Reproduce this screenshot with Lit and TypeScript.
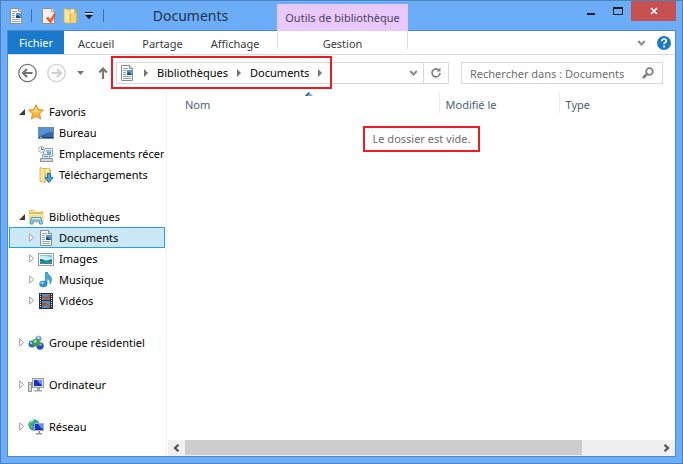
import { LitElement, html, css, svg, nothing } from "lit";
import { customElement, property } from "lit/decorators.js";

const icons: Record<string, unknown> = {
  doc: svg`<path d="M2.500.5h8l3 3v12h-11z" fill="#fdfdfd" stroke="#858d96"/><path d="M10.500.5v3h3" fill="#dfe4ea" stroke="#858d96"/><path d="M4 3.500h5M4 5.500h3M4 7.500h3M4 9.500h3M4 11.500h8M4 13.500h8" stroke="#93a5bd"/><rect x="8" y="5" width="5" height="5" fill="#5d9bd8"/><path d="M8 8l2-1 3 3H8z" fill="#1f4a86"/>`,
  check: svg`<path d="M2.500.5h9l3 3v12h-12z" fill="#f4f1ee" stroke="#8e8e98"/><path d="M11.500.5v3h3" fill="#fff" stroke="#9b9ba3"/><path d="M7 9.500l3.500 4L15 6" fill="none" stroke="#e3673a" stroke-width="2.800"/>`,
  folder: svg`<path d="M2 1h11l2 2v12H2z" fill="#d9ae42"/><path d="M8 1.500h4v5H8z" fill="#fff3c4"/><path d="M9 5h5v10H8z" fill="#f3d36c"/><path d="M2 .5L8 2v13.500L2 14.500z" fill="#fae69c" stroke="#d8ac45" stroke-width=".8"/>`,
  star: svg`<path d="M8 .8l2.200 4.800 5.200.5-3.900 3.600 1.100 5.300L8 12.300 3.400 15l1.100-5.300L.6 6.100l5.200-.5z" fill="#ffb83c" stroke="#e58a27"/><path d="M8 3l1.400 3.500 3.200.4L8 8.500 3.500 7l3.100-.4z" fill="#ffe08a"/>`,
  desktop: svg`<rect x=".5" y="2.500" width="15" height="11" fill="#3466ae" stroke="#6d8cae"/><path d="M1 3h14v4Q8 7 1 12z" fill="#5b8fd4"/><path d="M1 12.500h14" stroke="#173f7b"/><path d="M2 12.500h2" stroke="#7fd0ef"/>`,
  recent: svg`<path d="M5.500 2.500h9v8h-9z" fill="#e9eff4" stroke="#9aa4ad"/><path d="M8 5h5" stroke="#4b9ad4"/><rect x="9" y="6" width="4" height="3" fill="#66aee0"/><path d="M4.500 8.500h7v4h-7z" fill="#e0e4e7" stroke="#9aa4ad"/><path d="M6 10.500h4" stroke="#4b9ad4"/><path d="M2.500 12.500h12v3h-12z" fill="#d3d9de" stroke="#88929b"/><circle cx="3.500" cy="3.500" r="3" fill="#f7f7f7" stroke="#a1a6ab"/><path d="M3.500 1.500v2h2" fill="none" stroke="#666"/>`,
  download: svg`<path d="M2 1h9l2 2v12H2z" fill="#e0b850"/><path d="M7 2h4v5H7z" fill="#fff3c4"/><path d="M8 5h4v10H7z" fill="#f3d36c"/><path d="M2 .5L7 2v13.500L2 14.500z" fill="#fae69c" stroke="#d8ac45" stroke-width=".8"/><path d="M9.500 6.500h3v4H15l-4 5-4-5h2.500z" fill="#41a9ea" stroke="#1971b8"/>`,
  library: svg`<path d="M1 1h5l1 1h8v3H1z" fill="#e5bd58"/><path d="M1 4h14.500v10H.5z" fill="#f8dd85"/><path d="M2 2.500h12" stroke="#fff5cd"/><path d="M1 4.500h14" stroke="#dcb75c"/><path d="M1 5.500h14" stroke="#fff2bd"/><path d="M3.500 8.500h9.500l1.500 6.500h-3v-3H5v3H2z" fill="#8fd0f1" stroke="#4a9dcc"/><path d="M4.500 9.500h7.500" stroke="#d8f2ff"/>`,
  image: svg`<rect x=".5" y="2.500" width="15" height="12" fill="#fcfcfc" stroke="#969da3"/><rect x="2" y="4" width="12" height="9" fill="#7cc5ec"/><path d="M2 5q5-1 12 2v2H2z" fill="#c8ecf8"/><path d="M2 8q3 0 6 2l6-2v2H2z" fill="#28734c"/><path d="M2 10h12v3H2z" fill="#2a8aa9"/>`,
  music: svg`<path d="M7.500 0h1.800q.5 2.500 3.200 4.500Q15 7 12 12q1-4-3-5.500V12H7.500z" fill="#49a9e4" stroke="#2585c8" stroke-width=".7"/><ellipse cx="5.300" cy="12" rx="4" ry="3.300" fill="#2690db"/><ellipse cx="4.300" cy="11" rx="1.800" ry="1.200" fill="#8bd0f5"/>`,
  video: svg`<path d="M1 0h14v16H1z" fill="#24303a"/><path d="M4 1h8v6H4zM4 8h8v7H4z" fill="#4f94c8"/><path d="M4 3l4 1 4-3v5L8 7 4 5zM4 10l3-1 5 4v2L8 12l-4 2z" fill="#a7583f"/><path d="M2.500 1v14M13.500 1v14" stroke="#e4edf2" stroke-dasharray="1 1"/>`,
  home: svg`<circle cx="4" cy="9" r="3.500" fill="#3267c2"/><circle cx="10.500" cy="3.800" r="3" fill="#6b9be0"/><circle cx="12" cy="11" r="3.700" fill="#2451b3"/><circle cx="8" cy="7.500" r="3.800" fill="#38a03f"/><circle cx="7.200" cy="6.300" r="1.500" fill="#a4e09a"/><circle cx="3" cy="8" r="1.200" fill="#a9c8f3"/><circle cx="12.500" cy="9.500" r="1.200" fill="#8eb1ec"/><circle cx="10.500" cy="2.700" r="1.200" fill="#cfe0fa"/>`,
  computer: svg`<rect x="4.500" y="1.500" width="11" height="9" fill="#dcdfe3" stroke="#9a9fa5"/><path d="M6 3h8v6H6z" fill="#1730c4"/><path d="M9 3h5v5q-3-1-5-5z" fill="#6a8df0"/><path d="M9 11h3v2h2v1.500H6V13h3z" fill="#a5a9ae"/><path d="M.5 5.500h3v9h-3z" fill="#d8dadd" stroke="#8d9196"/><path d="M1.500 7.500h1" stroke="#43b649"/>`,
  network: svg`<circle cx="6" cy="6" r="5.700" fill="#2c8fc8"/><path d="M1 4q3-4 6-3L5 4 3 5l2 3-1 2Q0 8 1 4zM8 1q3 1 3 4L8 4z" fill="#4fbf58"/><path d="M2 3q2-2 4-2" stroke="#b6eaf5" stroke-width="1.400" fill="none"/><rect x="6.500" y="4.500" width="9" height="7" fill="#1730c4" stroke="#a6adb8"/><path d="M10 5h5v5q-3-1-5-5z" fill="#6a8df0"/><path d="M10.500 12h1.500v2h2v1.500H8V14h2.500z" fill="#8e949b"/>`,
  back: svg`<circle cx="9.500" cy="10" r="8.700" fill="none" stroke="#757575" stroke-width="1.300"/><path d="M14.500 10H6M9 6l-4 4 4 4" fill="none" stroke="#757575" stroke-width="2.200"/>`,
  forward: svg`<circle cx="9.500" cy="10" r="8.700" fill="none" stroke="#d0d0d0" stroke-width="1.300"/><path d="M4.500 10H13M10 6l4 4-4 4" fill="none" stroke="#d0d0d0" stroke-width="2.200"/>`,
  up: svg`<path d="M6 13V3M2.200 6.500L6 2.500l3.800 4" fill="none" stroke="#777" stroke-width="2.200"/>`,
  down: svg`<path d="M0 0h7L3.500 4z" fill="#777"/>`,
  chevron: svg`<path d="M1.200 1L4.500 4.500 7.800 1" fill="none" stroke="#8f8f8f" stroke-width="2.200"/>`,
  crumb: svg`<path d="M0 0l4 4-4 4z" fill="#757575"/>`,
  refresh: svg`<path d="M9 3.200A4 4 0 1 0 10 6" fill="none" stroke="#808080" stroke-width="1.700"/><path d="M6.500 4.500H10.500V.5z" fill="#808080"/>`,
  search: svg`<circle cx="7.500" cy="4.500" r="3.300" fill="none" stroke="#808080" stroke-width="1.800"/><path d="M5 7L1 11" stroke="#808080" stroke-width="2.600"/>`,
  help: svg`<circle cx="7" cy="7" r="7" fill="#1979ca"/><path d="M4.800 5.300q0-2.300 2.300-2.300 2.200 0 2.200 1.900 0 1.100-1.200 1.700-1 .5-1 1.700M7.100 9.500v2" fill="none" stroke="#fff" stroke-width="1.700"/>`,
  quick: svg`<path d="M0 .5h8" stroke="#10151b"/><path d="M0 3h8L4 7z" fill="#10151b"/><path d="M0 1.500h8" stroke="#d4e6fa"/>`,
  min: svg`<path d="M0 8h8" stroke="#1e1e1e" stroke-width="2"/>`,
  max: svg`<path d="M.5 1.500h9v6h-9z" fill="none" stroke="#1e1e1e"/><path d="M0 1h10" stroke="#1e1e1e" stroke-width="2"/>`,
  close: svg`<path d="M1 1l6 6M7 1L1 7" stroke="#fff" stroke-width="1.700"/>`,
  open: svg`<path d="M6 0v6H0z" fill="#3a3a3a"/>`,
  closed: svg`<path d="M.7.9L4.600 4.500.7 8.100z" fill="#fff" stroke="#a0a0a0"/>`,
  left: svg`<path d="M5.500.8L2 4l3.500 3.200" fill="none" stroke="#505050" stroke-width="2.200"/>`,
  right: svg`<path d="M1.500.8L5 4 1.500 7.200" fill="none" stroke="#505050" stroke-width="2.200"/>`,
  sort: svg`<path d="M0 4l4-4 4 4z" fill="#7fabc6"/><path d="M0 4l4-4v2L2 4z" fill="#28506e"/>`,
};

const icon = (name: string, w = 16, h = w) =>
  html`<svg width=${w} height=${h} viewBox="0 0 ${w} ${h}" aria-hidden="true">${icons[name]}</svg>`;

const shared = css`
  * { box-sizing: border-box; }
  button, input { font: inherit; color: inherit; margin: 0; padding: 0; border: 0; background: none; border-radius: 0; }
  button { display: flex; align-items: center; justify-content: center; }
  a { color: inherit; text-decoration: none; }
  svg { display: block; flex: none; }
`;

@customElement("tree-item")
export class TreeItem extends LitElement {
  @property() label = "";
  @property() icon = "";
  @property() twisty = "";
  @property({ type: Boolean }) nested = false;
  @property({ type: Boolean }) selected = false;

  static styles = [shared, css`
    :host { display: block; }
    .row { display: flex; align-items: center; height: 21px; margin-left: 1px; padding-left: 6px; border: 1px solid transparent; overflow: hidden; }
    .nested { padding-left: 16px; }
    .selected { background: #cbe8f6; border-color: #26a0da; }
    .twisty { width: 12px; height: 19px; flex: none; }
    .link { display: flex; align-items: center; gap: 5px; white-space: nowrap; }
  `];

  render() {
    const mark = this.twisty === "open" ? icon("open", 6) : icon("closed", 6, 9);
    return html`<div class="row ${this.nested ? "nested" : ""} ${this.selected ? "selected" : ""}">
      ${this.twisty
        ? html`<button class="twisty" aria-label="Développer ${this.label}">${mark}</button>`
        : html`<span class="twisty"></span>`}
      <a class="link" href="#" aria-current=${this.selected ? "true" : nothing}>${icon(this.icon)}<span>${this.label}</span></a>
    </div>`;
  }
}

interface Entry { label: string; icon: string; twisty?: string; children?: Entry[]; selected?: boolean }

const tree: Entry[] = [
  { label: "Favoris", icon: "star", twisty: "open", children: [
    { label: "Bureau", icon: "desktop" },
    { label: "Emplacements récents", icon: "recent" },
    { label: "Téléchargements", icon: "download" },
  ] },
  { label: "Bibliothèques", icon: "library", twisty: "open", children: [
    { label: "Documents", icon: "doc", twisty: "closed", selected: true },
    { label: "Images", icon: "image", twisty: "closed" },
    { label: "Musique", icon: "music", twisty: "closed" },
    { label: "Vidéos", icon: "video", twisty: "closed" },
  ] },
  { label: "Groupe résidentiel", icon: "home", twisty: "closed" },
  { label: "Ordinateur", icon: "computer", twisty: "closed" },
  { label: "Réseau", icon: "network", twisty: "closed" },
];

@customElement("app-root")
export class AppRoot extends LitElement {
  static styles = [shared, css`
    :host { display: block; font: 11px/16px "Noto Sans", "Open Sans", sans-serif; color: #000; }
    .window { display: flex; flex-direction: column; min-height: 100vh; padding: 0 6px 6px; background: #6badf6; border: 1px solid #4a83bf; }

    .titlebar { display: flex; height: 29px; }
    .caption { display: flex; align-items: center; width: 270px; padding-left: 1px; }
    .quick { display: flex; align-items: center; }
    .sep { width: 1px; height: 13px; background: #3f6fa5; }
    .q-doc { margin-right: 7px; }
    .q-check { margin: 0 6px 0 8px; }
    .q-more { margin: 0 10px 0 7px; }
    .title { flex: 1; margin: 0; font-size: 14px; line-height: 20px; font-weight: 400; text-align: center; color: #1f3348; }
    .context { width: 131px; margin: 3px 0 -1px; padding-top: 6px; background: #e9c9fc; color: #4d4062; text-align: center; white-space: nowrap; position: relative; }
    .controls { display: flex; margin-left: auto; height: 20px; }
    .ctl { width: 27px; height: 20px; }
    .ctl.close { width: 45px; background: #c75050; }

    .client { flex: 1; display: flex; flex-direction: column; background: #fff; border: 1px solid #4d8acb; }
    .tabs { display: flex; height: 24px; border-bottom: 1px solid #dadbdc; color: #3b3b3b; }
    .tab { height: 23px; padding: 2px 14px 0; }
    .tab.file { width: 56px; padding: 0; background: #1979ca; color: #fff; }
    .regular { display: flex; width: 213px; }
    .tab.manage { width: 131px; border: solid #dcdcdc; border-width: 0 1px; height: 18px; padding: 7px 0 0; }
    .tabtools { display: flex; align-items: center; gap: 11px; margin-left: auto; padding-right: 4px; }

    .nav { display: flex; align-items: center; height: 37px; padding: 0 12px 1px 10px; }
    .recent { margin: 0 13px 0 10px; }
    .fwd { margin-left: 9px; }
    .address { flex: 1; display: flex; height: 22px; margin: 0 12px 0 7px; border: 1px solid #d9d9d9; }
    .crumbs { display: flex; align-items: center; position: relative; padding-left: 2px; gap: 9px; white-space: nowrap; }
    .crumbs::after { content: ""; position: absolute; inset: -7px -10px -6px -6px; border: 2px solid #ed1c24; pointer-events: none; }
    .drop { margin-left: auto; width: 19px; }
    .refresh { width: 25px; border-left: 1px solid #d9d9d9; }
    .search { display: flex; align-items: center; width: 202px; height: 22px; padding: 0 8px; border: 1px solid #d9d9d9; }
    .field { flex: 1; min-width: 0; outline: 0; height: 20px; }
    .field::placeholder { color: #6d6d6d; opacity: 1; }

    .body { flex: 1; display: flex; }
    .sidebar { width: 159px; flex: none; padding: 9px 1px 9px 0; border-right: 1px solid #f3f3f5; }
    .group { display: block; margin-bottom: 21px; }
    .group:last-child { margin-bottom: 0; }
    .files { flex: 1; min-width: 0; display: flex; flex-direction: column; padding-left: 1px; }
    .list { width: 100%; border-collapse: collapse; table-layout: fixed; color: #4c607a; }
    .list th { height: 21px; padding: 4px 6px 0; font-weight: 400; text-align: left; border-right: 1px solid #e3e8f2; position: relative; }
    .list th:last-child { border: 0; }
    .list .name { width: 271px; padding-left: 17px; }
    .date { width: 120px; }
    .sort { position: absolute; left: 137px; top: 0; }
    .message { display: flex; justify-content: center; padding-top: 13px; }
    .empty { margin: 0; padding: 3px 8px; border: 2px solid #ed1c24; color: #6d6d6d; }
    .scroll { display: flex; height: 16px; margin-top: auto; background: #f0f0f0; }
    .arrow { width: 17px; height: 16px; }
    .track { flex: 1; }
    .thumb { width: 84%; height: 15px; background: #cdcdcd; }
  `];

  private item(e: Entry, nested = false): unknown {
    return html`<tree-item .label=${e.label} .icon=${e.icon} .twisty=${e.twisty ?? ""} .nested=${nested} .selected=${!!e.selected}></tree-item>`;
  }

  render() {
    return html`<div class="window">
      <header class="titlebar">
        <div class="caption">
          <div class="quick">
            <span class="q-doc">${icon("doc")}</span><span class="sep"></span>
            <button class="q-check" aria-label="Propriétés">${icon("check")}</button>
            <button aria-label="Nouveau dossier">${icon("folder")}</button>
            <button class="q-more" aria-label="Personnaliser">${icon("quick", 8, 7)}</button><span class="sep"></span>
          </div>
          <h1 class="title">Documents</h1>
        </div>
        <div class="context">Outils de bibliothèque</div>
        <div class="controls">
          <button class="ctl" aria-label="Réduire">${icon("min", 8, 10)}</button>
          <button class="ctl" aria-label="Agrandir">${icon("max", 10, 8)}</button>
          <button class="ctl close" aria-label="Fermer">${icon("close", 8)}</button>
        </div>
      </header>
      <main class="client">
        <div class="tabs">
          <button class="tab file">Fichier</button>
          <div class="regular">
            <button class="tab">Accueil</button><button class="tab">Partage</button><button class="tab">Affichage</button>
          </div>
          <button class="tab manage">Gestion</button>
          <div class="tabtools">
            <button aria-label="Développer le ruban">${icon("chevron", 9, 6)}</button>
            <button aria-label="Aide">${icon("help", 14)}</button>
          </div>
        </div>
        <div class="nav">
          <button aria-label="Précédent">${icon("back", 20)}</button>
          <button class="fwd" aria-label="Suivant">${icon("forward", 20)}</button>
          <button class="recent" aria-label="Emplacements récents">${icon("down", 7, 4)}</button>
          <button aria-label="Dossier parent">${icon("up", 12, 14)}</button>
          <div class="address">
            <nav class="crumbs" aria-label="Adresse">
              ${icon("doc")}${icon("crumb", 4, 8)}<a href="#">Bibliothèques</a>${icon("crumb", 4, 8)}<a href="#">Documents</a>${icon("crumb", 4, 8)}
            </nav>
            <button class="drop" aria-label="Adresses précédentes">${icon("chevron", 9, 6)}</button>
            <button class="refresh" aria-label="Actualiser">${icon("refresh", 12)}</button>
          </div>
          <div class="search">
            <input class="field" type="text" aria-label="Rechercher" placeholder="Rechercher dans : Documents">
            <button aria-label="Lancer la recherche">${icon("search", 12)}</button>
          </div>
        </div>
        <div class="body">
          <nav class="sidebar" aria-label="Dossiers">
            ${tree.map((e) => html`<div class="group">${this.item(e)}${e.children?.map((c) => this.item(c, true))}</div>`)}
          </nav>
          <section class="files">
            <table class="list">
              <thead><tr><th class="name">Nom<span class="sort">${icon("sort", 8, 4)}</span></th><th class="date">Modifié le</th><th>Type</th></tr></thead>
            </table>
            <div class="message"><p class="empty">Le dossier est vide.</p></div>
            <div class="scroll">
              <button class="arrow" aria-label="Défiler à gauche">${icon("left", 7, 8)}</button>
              <div class="track"><div class="thumb"></div></div>
              <button class="arrow" aria-label="Défiler à droite">${icon("right", 7, 8)}</button>
            </div>
          </section>
        </div>
      </main>
    </div>`;
  }
}
